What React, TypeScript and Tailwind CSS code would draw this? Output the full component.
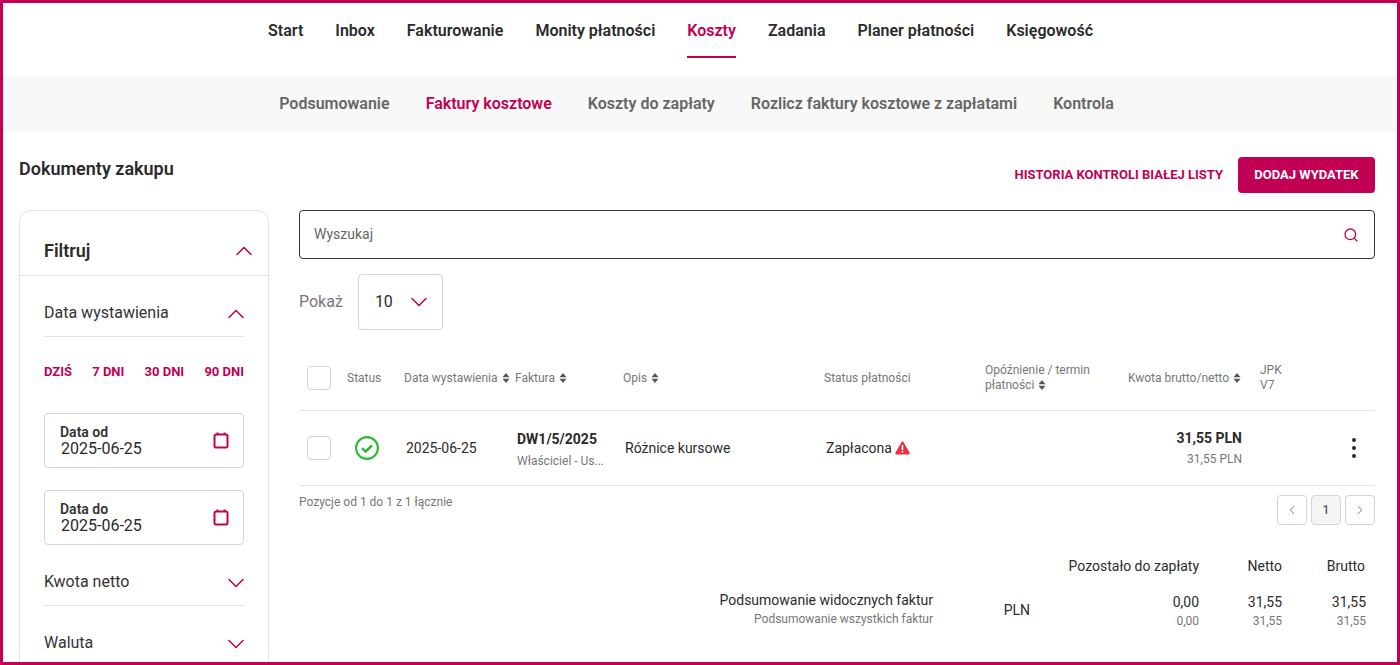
import React from "react";
import { ChevronDown, ChevronLeft, ChevronRight, ChevronUp, Search } from "lucide-react";

const mainNav = ["Start", "Inbox", "Fakturowanie", "Monity płatności", "Koszty", "Zadania", "Planer płatności", "Księgowość"];
const subNav = ["Podsumowanie", "Faktury kosztowe", "Koszty do zapłaty", "Rozlicz faktury kosztowe z zapłatami", "Kontrola"];
const cols = "grid grid-cols-[40px_57px_111px_108px_201px_161px_143px_132px_1fr] items-center";

const SortIcon = () => (
  <svg width="8" height="10" viewBox="0 0 8 10" className="ml-1 inline-block align-[-1px]">
    <path d="M4 0 7.5 4.2H0.5Z" fill="#555" />
    <path d="M4 10 7.5 5.8H0.5Z" fill="#555" />
  </svg>
);

const CalendarIcon = () => (
  <svg width="16" height="17" viewBox="0 0 16 17" fill="none" stroke="#c10053" strokeWidth="2" className="-mt-px">
    <rect x="1.5" y="2.5" width="13" height="13" rx="1.5" />
    <path d="M4.5 0.5v2M11.5 0.5v2" />
  </svg>
);

const DateField = ({ label, value }: { label: string; value: string }) => (
  <div className="flex h-[55px] w-[200px] items-center justify-between rounded border border-[#d4d4d4] pl-[15px] pr-[14px]">
    <div className="pt-[2px]">
      <div className="text-[14px] leading-[14px] font-semibold text-[#333]">{label}</div>
      <div className="mt-px pl-px text-[16px] leading-[18px] text-[#2a2a2a]">{value}</div>
    </div>
    <CalendarIcon />
  </div>
);

const FilterHead = ({ label, open }: { label: string; open?: boolean }) => (
  <div className="flex h-[61px] items-end justify-between border-b border-[#e2e2e2] pb-[11px] text-[16px] leading-6 text-[#333]">
    <span>{label}</span>
    {open ? (
      <ChevronUp size={28} strokeWidth={1.3} className="-mr-[6px] -mb-[3px] text-[#c10053]" />
    ) : (
      <ChevronDown size={28} strokeWidth={1.3} className="-mr-[6px] -mb-[3px] text-[#c10053]" />
    )}
  </div>
);

const Checkbox = () => <div className="h-6 w-6 rounded border border-[#d4d4d4] bg-white" />;

export default function App() {
  return (
    <div className="h-[665px] overflow-hidden border-[3px] border-[#c40054] bg-white font-['Roboto',sans-serif]">
      <nav className="flex h-[73px] justify-center gap-8 pr-[39px] text-[16px] font-semibold text-[#2b2b2b]">
        {mainNav.map((item) =>
          item === "Koszty" ? (
            <a key={item} className="h-[55px] border-b-2 border-[#c10053] pt-[16px] text-[#c10053]">
              {item}
            </a>
          ) : (
            <a key={item} className="pt-[16px]">
              {item}
            </a>
          )
        )}
      </nav>
      <nav className="flex h-[56px] items-center justify-center gap-9 bg-[#f8f8f8] pr-[7px] text-[16px] font-semibold text-[#666]">
        {subNav.map((item) =>
          item === "Faktury kosztowe" ? (
            <a key={item} className="text-[#c10053]">
              {item}
            </a>
          ) : (
            <a key={item}>{item}</a>
          )
        )}
      </nav>

      <div className="pl-[16px] pr-[22px]">
        <div className="flex h-[78px] items-start justify-between pt-[25px]">
          <h1 className="text-[18px] leading-[24px] font-semibold text-[#2b2b2b]">Dokumenty zakupu</h1>
          <div className="flex items-center gap-[15px]">
            <a className="text-[13px] font-bold text-[#c10053]">HISTORIA KONTROLI BIAŁEJ LISTY</a>
            <button className="h-9 w-[137px] rounded bg-[#c10053] text-[13px] font-bold text-white">
              DODAJ WYDATEK
            </button>
          </div>
        </div>

        <div className="flex gap-[30px]">
          <aside className="h-[500px] w-[250px] shrink-0 rounded-t-[12px] border border-[#e2e2e2]">
            <div className="flex h-[65px] items-end justify-between border-b border-[#e2e2e2] pb-[12px] pl-6 pr-[10px]">
              <span className="text-[18px] leading-6 font-semibold text-[#2b2b2b]">Filtruj</span>
              <ChevronUp size={28} strokeWidth={1.3} className="-mb-[2px] text-[#c10053]" />
            </div>
            <div className="px-6">
              <FilterHead label="Data wystawienia" open />
              <div className="flex h-[76px] items-center justify-between pb-[6px] text-[13px] font-bold text-[#c10053]">
                <span>DZIŚ</span>
                <span>7 DNI</span>
                <span>30 DNI</span>
                <span>90 DNI</span>
              </div>
              <div className="flex flex-col gap-[22px]">
                <DateField label="Data od" value="2025-06-25" />
                <DateField label="Data do" value="2025-06-25" />
              </div>
              <FilterHead label="Kwota netto" />
              <FilterHead label="Waluta" />
            </div>
          </aside>

          <main className="min-w-0 flex-1">
            <div className="flex h-[49px] items-center justify-between rounded border border-[#333] pl-[14px] pr-[15px]">
              <span className="text-[14px] text-[#666]">Wyszukaj</span>
              <Search size={16} strokeWidth={1.9} className="text-[#c10053]" />
            </div>

            <div className="mt-[15px] flex items-center gap-[15px]">
              <span className="text-[16px] text-[#777]">Pokaż</span>
              <div className="flex h-14 w-[85px] items-center justify-between rounded border border-[#d4d4d4] pl-4 pr-[9px] text-[16px] text-[#2b2b2b]">
                <span>10</span>
                <ChevronDown size={28} strokeWidth={1.3} className="text-[#c10053]" />
              </div>
            </div>

            <div className={`${cols} mt-[20px] h-[61px] border-b border-[#e2e2e2] pb-[4px] pl-2 text-[12px] leading-[15px] text-[#777]`}>
              <Checkbox />
              <span>Status</span>
              <span>
                Data wystawienia
                <SortIcon />
              </span>
              <span>
                Faktura
                <SortIcon />
              </span>
              <span>
                Opis
                <SortIcon />
              </span>
              <span>Status płatności</span>
              <span>
                Opóźnienie / termin
                <br />
                płatności
                <SortIcon />
              </span>
              <span>
                Kwota brutto/netto
                <SortIcon />
              </span>
              <span>
                JPK
                <br />
                V7
              </span>
            </div>

            <div className={`${cols} h-[75px] border-b border-[#e2e2e2] pl-2 text-[14px] text-[#2b2b2b]`}>
              <Checkbox />
              <div className="pl-2">
                <svg width="24" height="24" viewBox="0 0 24 24" fill="none" stroke="#2fb838">
                  <circle cx="12" cy="12" r="10.9" strokeWidth="2.1" />
                  <path d="M7 12.2l3.5 3.3 6.5-6" strokeWidth="2.4" />
                </svg>
              </div>
              <span className="pl-[2px]">2025-06-25</span>
              <div className="pl-[2px] pt-px">
                <div className="font-bold leading-[20px]">DW1/5/2025</div>
                <div className="mt-[4px] text-[12px] leading-[16px] text-[#777]">Właściciel - Us...</div>
              </div>
              <span className="pl-[2px]">Różnice kursowe</span>
              <span className="flex items-center gap-[3px] pl-[2px]">
                Zapłacona
                <svg width="15" height="14" viewBox="0 0 15 14">
                  <path d="M7.5 0.5c.5 0 .9.3 1.1.7l6 10.6c.4.8-.1 1.7-1 1.7H1.4c-.9 0-1.4-.9-1-1.7l6-10.6c.2-.4.6-.7 1.1-.7Z" fill="#e5343f" />
                  <rect x="6.7" y="4" width="1.6" height="5" fill="#fff" />
                  <rect x="6.7" y="10" width="1.6" height="1.6" fill="#fff" />
                </svg>
              </span>
              <span />
              <div className="-mt-[2px] pr-[18px] text-right">
                <div className="font-bold leading-[20px]">31,55 PLN</div>
                <div className="mt-[3px] text-[12px] leading-[16px] text-[#777]">31,55 PLN</div>
              </div>
              <div className="flex justify-end pr-[19px]">
                <div className="flex flex-col gap-[4px]">
                  <i className="h-1 w-1 rounded-full bg-[#2b2b2b]" />
                  <i className="h-1 w-1 rounded-full bg-[#2b2b2b]" />
                  <i className="h-1 w-1 rounded-full bg-[#2b2b2b]" />
                </div>
              </div>
            </div>

            <div className="flex items-start justify-between pt-[8px]">
              <span className="text-[12px] leading-4 text-[#777]">Pozycje od 1 do 1 z 1 łącznie</span>
              <div className="flex gap-[4px] pt-[1px] text-[#555]">
                <div className="flex h-[30px] w-[30px] items-center justify-center rounded border border-[#d4d4d4]">
                  <ChevronLeft size={14} strokeWidth={1.3} />
                </div>
                <div className="flex h-[30px] w-[30px] items-center justify-center rounded border border-[#d4d4d4] bg-[#f5f5f5] text-[12px] font-medium">
                  1
                </div>
                <div className="flex h-[30px] w-[30px] items-center justify-center rounded border border-[#d4d4d4]">
                  <ChevronRight size={14} strokeWidth={1.3} />
                </div>
              </div>
            </div>

            <div className="mt-[31px] grid grid-cols-[634px_97px_169px_83px_84px] pr-[9px] text-right text-[14px] leading-[20px] text-[#2b2b2b]">
              <span />
              <span />
              <span>Pozostało do zapłaty</span>
              <span>Netto</span>
              <span className="pr-px">Brutto</span>
              <div className="mt-[14px]">
                <div>Podsumowanie widocznych faktur</div>
                <div className="text-[12px] leading-[19px] text-[#777]">Podsumowanie wszystkich faktur</div>
              </div>
              <div className="mt-[14px] flex items-center justify-end">PLN</div>
              <div className="mt-[16px]">
                <div>0,00</div>
                <div className="text-[12px] leading-[18px] text-[#777]">0,00</div>
              </div>
              <div className="mt-[16px]">
                <div>31,55</div>
                <div className="text-[12px] leading-[18px] text-[#777]">31,55</div>
              </div>
              <div className="mt-[16px]">
                <div>31,55</div>
                <div className="text-[12px] leading-[18px] text-[#777]">31,55</div>
              </div>
            </div>
          </main>
        </div>
      </div>
    </div>
  );
}
